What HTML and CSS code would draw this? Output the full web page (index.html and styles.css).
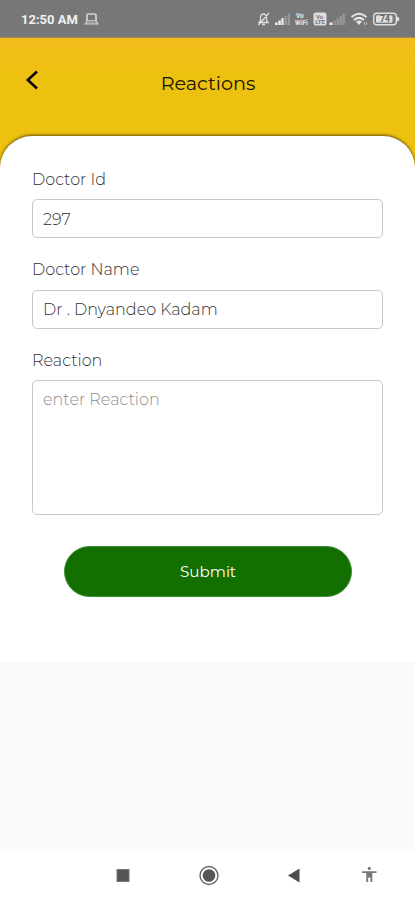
FILE: index.html
```html
<!DOCTYPE html>
<html lang="en">
<head>
    <meta charset="UTF-8">
    <meta name="viewport" content="width=device-width, initial-scale=1.0">
    <title>Reactions</title>
    <link rel="stylesheet" href="styles.css">
</head>
<body>

    <div class="status-bar">
        <span class="clock">12:50 AM</span>
        <svg class="laptop" width="15" height="14" viewBox="0 0 15 14">
            <path d="M3 9V3.2Q3 2 4.2 2H10.8Q12 2 12 3.2V9Z" fill="none" stroke="#d2d2d2" stroke-width="1.7"/>
            <path d="M3 9L1 12H14L12 9" fill="#999" stroke="#d2d2d2" stroke-width="1.2"/>
        </svg>
        <svg class="status-icons" width="144" height="18" viewBox="256 10 144 18">
            <!-- muted bell -->
            <path d="M259 22.5H268L266.5 20.5V17Q266 14 263.5 14T260.5 17V20.5ZM262 24.5H265M258.5 25L269 13" fill="none" stroke="#dedede" stroke-width="1.3"/>
            <!-- first signal -->
            <path d="M275 25V22.5H277.5V25ZM278.3 25V20.5H280.8V25ZM281.4 25V18H283.6V25Z" fill="#eee"/>
            <path d="M284.5 25V16H286.8V25ZM287.7 25V13.5H290V25Z" fill="#999"/>
            <text x="296" y="18.4" class="tiny">Vo</text>
            <text x="295" y="25" class="tiny">WiFi</text>
            <rect x="313.5" y="12.5" width="13" height="13" rx="2.5" fill="#dedede"/>
            <text x="316" y="18.5" class="tiny dark">Vo</text>
            <text x="315.2" y="24.3" class="tiny dark">LTE</text>
            <!-- second signal -->
            <path d="M329.5 25V22.5H332.5V25Z" fill="#eee"/>
            <path d="M333.5 25V20.5H335.7V25ZM336.6 25V18.5H338.8V25ZM339.6 25V16H341.8V25ZM342.6 25V13.5H344.8V25Z" fill="#999"/>
            <!-- wifi -->
            <path d="M351.5 17Q359 10.5 366.5 17M354 20Q359 15.8 364 20" fill="none" stroke="#e6e6e6" stroke-width="2"/>
            <path d="M356 21.5Q359 19.5 362 21.5L359 25Z" fill="#e6e6e6"/>
            <path d="M364.5 22V25M366.5 22V25" stroke="#bbb" stroke-width="1"/>
            <!-- battery -->
            <rect x="373.7" y="13.2" width="22.6" height="11.6" rx="3.2" fill="none" stroke="#dedede" stroke-width="1.4"/>
            <rect x="376" y="15.3" width="16.5" height="7.4" rx="1.5" fill="#dedede"/>
            <path d="M397 16.5Q399.5 17 399.5 19T397 21.5Z" fill="#dedede"/>
            <text x="380" y="22" class="battery-level">74</text>
        </svg>
    </div>

    <div class="header">
        <a href="#" class="back" aria-label="Back">
            <svg width="14" height="20" viewBox="0 0 14 20">
                <path d="M12 1.5L2.8 10L12 18.5" fill="none" stroke="#000" stroke-width="2.5"/>
            </svg>
        </a>
        <h1>Reactions</h1>
    </div>

    <div class="content">
        <form class="form-card">
            <label for="doctor-id">Doctor Id</label>
            <input type="text" id="doctor-id" value="297">

            <label for="doctor-name">Doctor Name</label>
            <input type="text" id="doctor-name" value="Dr . Dnyandeo Kadam">

            <label for="reaction">Reaction</label>
            <textarea id="reaction" placeholder="enter Reaction"></textarea>

            <button type="button" class="submit">Submit</button>
        </form>
    </div>

    <div class="nav-bar">
        <svg width="415" height="49" viewBox="0 851 415 49">
            <rect x="117" y="869.5" width="12" height="12" fill="#555" stroke="#777" stroke-width="1"/>
            <circle cx="209" cy="875.5" r="9" fill="none" stroke="#666" stroke-width="1.4"/>
            <circle cx="209" cy="875.5" r="6.3" fill="#555"/>
            <path d="M288 875.5L299.5 868.5V882.5Z" fill="#4d4d4d"/>
            <!-- accessibility figure -->
            <circle cx="369.3" cy="868.4" r="1.6" fill="#777"/>
            <path d="M362 871.3H376.5V873H372.3V882H370.4V877.5H368.2V882H366.3V873H362Z" fill="#777"/>
        </svg>
    </div>

</body>
</html>
```

FILE: styles.css
```css
* {
    margin: 0;
    padding: 0;
    box-sizing: border-box;
}

body {
    font-family: Montserrat, Inter, sans-serif;
    font-weight: 300;
    background-color: #fafafa;
    color: #333;
    display: flex;
    flex-direction: column;
    height: 100vh;
    overflow: hidden;
}

/* Phone status bar */
.status-bar {
    height: 38px;
    background-color: #777;
    border-bottom: 1px solid #a08a48;
    display: flex;
    align-items: center;
    padding: 1px 15px 0 21px;
    flex-shrink: 0;
}

.clock {
    font-family: Roboto, sans-serif;
    font-weight: 700;
    font-size: 13px;
    color: #f0f0f0;
    width: 58px;
    white-space: nowrap;
}

.laptop {
    margin-left: 5px;
}

.status-icons {
    margin-left: auto;
}

.tiny {
    font: 700 6.5px Roboto, sans-serif;
    fill: #e6e6e6;
}

.dark {
    fill: #777;
    font-size: 6px;
}

.battery-level {
    font: 700 8.5px Roboto, sans-serif;
    fill: #666;
}

/* Yellow header */
.header {
    height: 98px;
    background: linear-gradient(#f3bd1b, #edc10f 40px);
    display: flex;
    align-items: flex-start;
    flex-shrink: 0;
}

.back {
    width: 60px;
    padding: 32px 0 0 25px;
}

.back svg {
    display: block;
}

h1 {
    flex: 1;
    padding: 32px 59px 0 0;
    text-align: center;
    font-size: 19.2px;
    line-height: 27px;
    font-weight: 400;
    color: #171200;
}

/* White panel with the form */
.content {
    background-color: #edc10f;
    flex-shrink: 0;
}

.form-card {
    height: 526px;
    background-color: #fff;
    border-radius: 32px 32px 0 0;
    box-shadow: 0 -1px 3px rgba(70, 50, 0, 0.8);
    clip-path: inset(-5px 0 0 0);
    padding: 34px 32px 0;
    display: flex;
    flex-direction: column;
}

label {
    font-size: 16px;
    line-height: 20px;
    margin-bottom: 9px;
}

input,
textarea {
    font-family: inherit;
    font-weight: 300;
    font-size: 16px;
    line-height: 20px;
    color: #333;
    background-color: #fff;
    border: 1px solid #c8c8c8;
    border-radius: 5px;
    outline: none;
    resize: none;
    padding: 1px 10px 0;
}

input {
    height: 39px;
    margin-bottom: 22px;
}

#doctor-name {
    margin-top: 0.5px;
}

textarea {
    height: 135px;
    padding-top: 9px;
    margin-bottom: 31px;
}

textarea::placeholder {
    color: #8c8c8c;
}

.submit {
    width: 288px;
    height: 51px;
    margin-left: 32px;
    border: 1px solid #3f8f35;
    border-radius: 26px;
    background-color: #126f00;
    color: #fff;
    font-family: inherit;
    font-size: 15.2px;
    font-weight: 400;
}

/* Phone navigation bar */
.nav-bar {
    height: 49px;
    margin-top: auto;
    background-color: #fff;
    flex-shrink: 0;
}

.nav-bar svg {
    display: block;
}
```
